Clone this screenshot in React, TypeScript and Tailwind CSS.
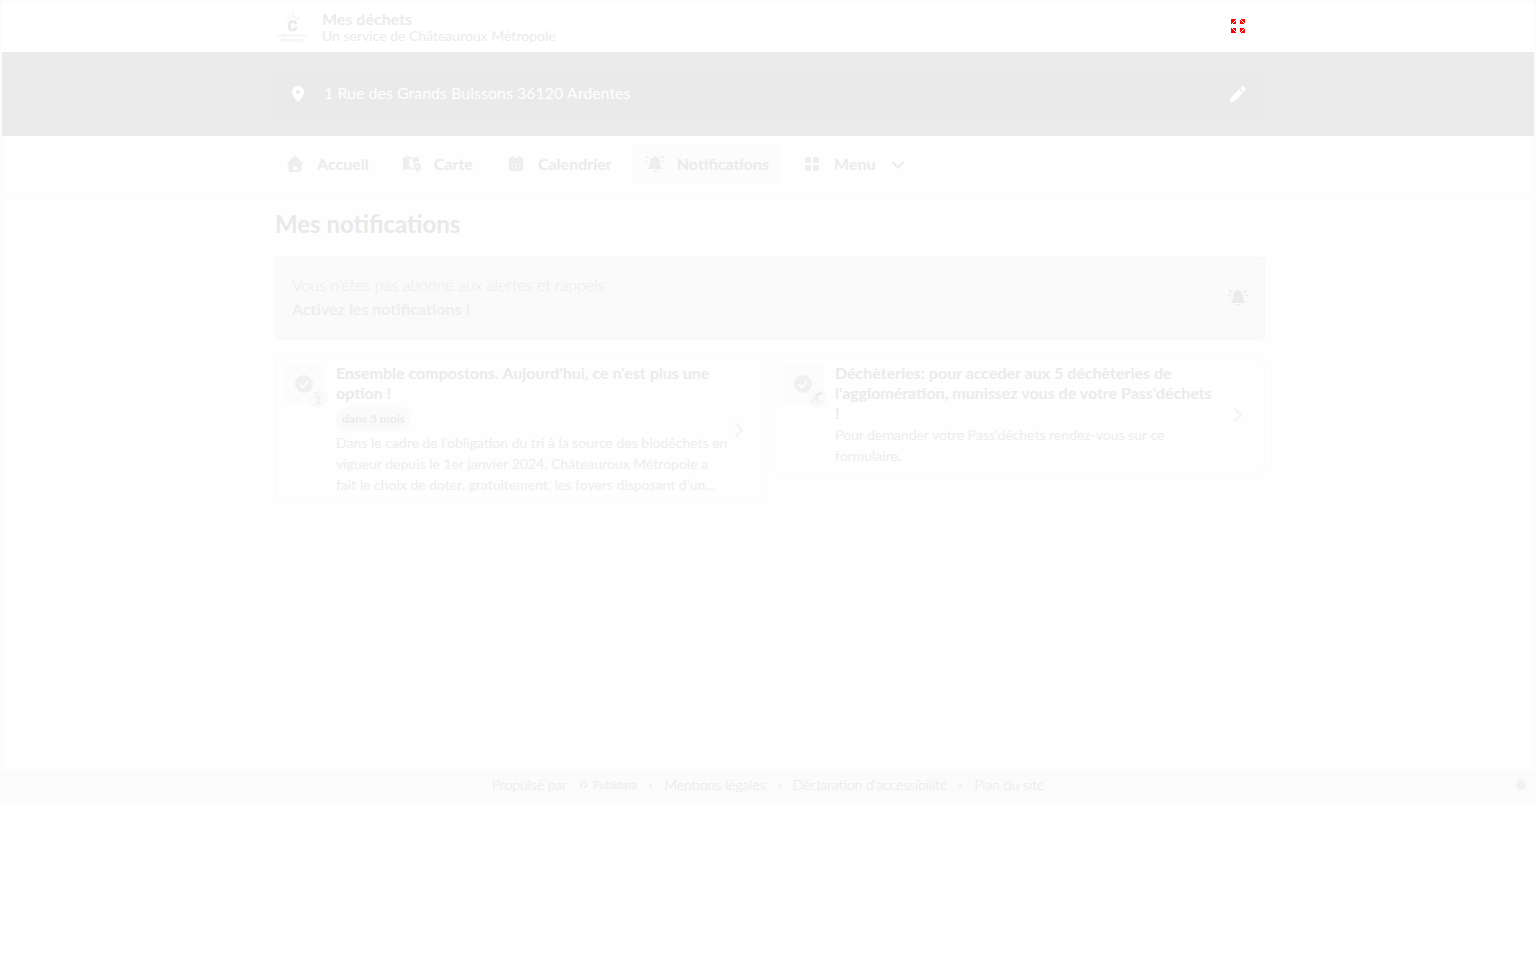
import type { ReactNode } from "react";

type NavItem = {
  label: string;
  icon: ReactNode;
  active?: boolean;
};

type Notice = {
  title: string;
  badge?: string;
  description: string;
  topic: ReactNode;
};

function TownLogo() {
  return (
    <svg viewBox="0 0 32 32" className="h-8 w-8 shrink-0" aria-label="Châteauroux Métropole" role="img">
      <path d="M17.500 1v6M13 3.500l3 3.500M22 3.500 19 7M11 7l3.500 1M24 7l-3.500 1" stroke="#efefef" fill="none" />
      <path d="M20.800 13.500v-.8c0-1.400-1.100-2.400-3-2.400-2.100 0-3.300 1.100-3.300 3v2.900c0 1.900 1.200 3 3.300 3 1.900 0 3-1 3-2.400V16" fill="none" stroke="#ebebeb" strokeWidth="2.800" />
      <text x="17" y="26" textAnchor="middle" fontSize="4" fontWeight="700" fill="#f1f1f1">CHÂTEAUROUX</text>
      <text x="17" y="31" textAnchor="middle" fontSize="4" fontWeight="700" fill="#f1f1f1">MÉTROPOLE</text>
    </svg>
  );
}

function FullscreenIcon() {
  return (
    <svg viewBox="0 0 14 14" className="h-3.5 w-3.5" fill="#ff0000" shapeRendering="crispEdges">
      <path d="M0 0h5L0 5zM5 1v4H1zM14 0H9l5 5zM9 1v4h4zM0 14h5L0 9zM5 13V9H1zM14 14H9l5-5zM9 13V9h4z" />
    </svg>
  );
}

function PinIcon() {
  return (
    <svg viewBox="0 0 20 20" className="h-5 w-5" fill="currentColor">
      <path fillRule="evenodd" d="M10 2a6 6 0 0 0-6 6c0 4.500 6 10 6 10s6-5.500 6-10a6 6 0 0 0-6-6zm0 8a2 2 0 1 1 0-4 2 2 0 0 1 0 4z" />
    </svg>
  );
}

function PencilIcon() {
  return (
    <svg viewBox="0 0 20 20" className="h-5 w-5" fill="currentColor">
      <path d="M11 5.200 14.800 9l-7.600 7.500c-1 .9-2.500 1.300-4.900 1.500-.2 0-.3-.1-.3-.3.200-2.400.6-3.900 1.500-4.900zM12 4.200l1.200-1.200a2.700 2.700 0 0 1 3.800 3.800l-1.200 1.200z" />
    </svg>
  );
}

function HomeIcon() {
  return (
    <svg viewBox="0 0 20 20" className="h-5 w-5" fill="currentColor">
      <path fillRule="evenodd" d="M9.300 2.300a1 1 0 0 1 1.400 0l7 6.700c.6.600.3 1.500-.5 1.500h-.7V16a2 2 0 0 1-2 2h-9a2 2 0 0 1-2-2v-5.500h-.7c-.8 0-1.100-.9-.5-1.500zM8 16h4v-2a2 2 0 0 0-4 0z" />
    </svg>
  );
}

function MapIcon() {
  return (
    <svg viewBox="0 0 20 20" className="h-5 w-5" fill="currentColor">
      <path fillRule="evenodd" d="M1 3.500 6.500 2l5.500 2 5-2v6a4.500 4.500 0 0 0-5.600 6.500L11 16l-4-1.500L1 17zM7 4v8.500l4 1.500V5.500z" />
      <path fillRule="evenodd" d="M15.500 9a3.500 3.500 0 0 0-3.500 3.500c0 3 3.500 6 3.500 6s3.500-3 3.500-6A3.500 3.500 0 0 0 15.500 9zm0 4.800a1.300 1.300 0 1 1 0-2.600 1.300 1.300 0 0 1 0 2.600z" />
    </svg>
  );
}

function CalendarIcon() {
  return (
    <svg viewBox="0 0 20 20" className="h-5 w-5" fill="currentColor">
      <path d="M5.500 2h2v1.500h5V2h2v1.500H15A2 2 0 0 1 17 5.500V7H3V5.500a2 2 0 0 1 2-2h.5z" />
      <path fillRule="evenodd" d="M3 7h14v8a2 2 0 0 1-2 2H5a2 2 0 0 1-2-2zm2.500 2.500v1.500H7V9.500zm3.700 0v1.500h1.600V9.500zm3.800 0v1.500h1.500V9.500zM5.500 13v1.500H7V13zm3.700 0v1.500h1.600V13zm3.800 0v1.500h1.500V13z" />
    </svg>
  );
}

function BellIcon() {
  return (
    <svg viewBox="0 0 20 20" className="h-5 w-5" fill="currentColor">
      <path d="M9 2h2v.8c2.600.5 4 2.400 4 5v3.500c0 1 2 2 2 3.200v.5H3v-.5c0-1.200 2-2.200 2-3.200V7.800c0-2.600 1.400-4.500 4-5zM8.300 16h3.400c-.2 1-.8 1.500-1.700 1.500S8.500 17 8.300 16z" />
      <path d="M1 2.500 4 4M0 7.500h3M19 2.500 16 4M20 7.500h-3" stroke="currentColor" strokeWidth="1.500" fill="none" />
    </svg>
  );
}

function GridIcon() {
  return (
    <svg viewBox="0 0 20 20" className="h-5 w-5" fill="currentColor">
      <rect x="3" y="3" width="6" height="6" rx="1.500" />
      <rect x="11" y="3" width="6" height="6" rx="1.500" />
      <rect x="3" y="11" width="6" height="6" rx="1.500" />
      <rect x="11" y="11" width="6" height="6" rx="1.500" />
    </svg>
  );
}

function ChevronIcon() {
  return (
    <svg viewBox="0 0 20 20" className="h-5 w-5" fill="none" stroke="currentColor" strokeWidth="2">
      <path d="m7 4 6 6-6 6" strokeLinecap="round" />
    </svg>
  );
}

function ChevronDownIcon() {
  return (
    <svg viewBox="0 0 20 20" className="h-5 w-5" fill="none" stroke="currentColor" strokeWidth="2.200">
      <path d="m4.500 8 5.500 5.500 5.500-5.500" />
    </svg>
  );
}

function CheckIcon() {
  return (
    <svg viewBox="0 0 20 20" className="h-5 w-5">
      <circle cx="10" cy="10" r="9" fill="#f0f0f0" />
      <path d="m6 10.500 2.800 2.800L14 7" fill="none" stroke="#fdfdfd" strokeWidth="1.800" />
    </svg>
  );
}

function InfoTopic() {
  return (
    <svg viewBox="0 0 16 16" className="h-4 w-4" fill="#f1f1f1">
      <path d="M4 2.500c2-.5 3.500 0 4.500 1.500-2 .8-3.500.3-4.500-1.500zM5.500 6h6v1.300L9.500 9v3l2 1v1h-6v-1l2-1V9l-2-1.700z" />
    </svg>
  );
}

function SitesTopic() {
  return (
    <svg viewBox="0 0 16 16" className="h-4 w-4" fill="none" stroke="#ebebeb">
      <path d="m7 5.500 6.500-3" strokeWidth="3" />
      <path d="m8 7.500-5.500 4.500M8 7.500v6.500M8 7.500l4.500 5M4 7.500l3-1.500" strokeWidth="1.100" />
    </svg>
  );
}

const navItems: NavItem[] = [
  { label: "Accueil", icon: <HomeIcon /> },
  { label: "Carte", icon: <MapIcon /> },
  { label: "Calendrier", icon: <CalendarIcon /> },
  { label: "Notifications", icon: <BellIcon />, active: true },
];

const notices: Notice[] = [
  {
    title: "Ensemble compostons. Aujourd'hui, ce n'est plus une option !",
    badge: "dans 3 mois",
    description:
      "Dans le cadre de l’obligation du tri à la source des biodéchets en vigueur depuis le 1er janvier 2024, Châteauroux Métropole a fait le choix de doter, gratuitement, les foyers disposant d’un…",
    topic: <InfoTopic />,
  },
  {
    title: "Déchèteries: pour acceder aux 5 déchèteries de l'agglomération, munissez vous de votre Pass'déchets !",
    description: "Pour demander votre Pass'déchets rendez-vous sur ce formulaire.",
    topic: <SitesTopic />,
  },
];

const footerLinks = ["Mentions légales", "Déclaration d'accessibilité", "Plan du site"];

function Container({ children, className = "" }: { children: ReactNode; className?: string }) {
  return <div className={`mx-auto w-full max-w-[990px] ${className}`}>{children}</div>;
}

function NoticeCard({ notice }: { notice: Notice }) {
  return (
    <a href="#notice" className="flex rounded-lg border border-[#fbfbfb] p-2">
      <div className="relative mr-3 flex h-10 w-10 shrink-0 items-center justify-center rounded-sm bg-[#fcfcfc]">
        <CheckIcon />
        <span className="absolute -right-1 -bottom-1 flex h-5 w-5 items-center justify-center rounded-full bg-[#fafafa]">
          {notice.topic}
        </span>
      </div>
      <div className="-mt-px min-w-0 flex-1">
        <h2 className="text-base leading-5 font-bold text-[#ebebeb]">{notice.title}</h2>
        {notice.badge && (
          <span className="mt-1 flex h-6 w-fit items-center rounded-full bg-[#fafafa] px-1.5 text-xs font-bold text-[#ebebeb]">
            {notice.badge}
          </span>
        )}
        <p className="mt-px -mr-2.5 text-sm leading-[21px] text-[#ededed]">{notice.description}</p>
      </div>
      <span className="flex w-9 shrink-0 items-center justify-center text-[#f3f3f3]">
        <ChevronIcon />
      </span>
    </a>
  );
}

export default function App() {
  return (
    <div className="min-h-screen bg-[#fefefe] font-['Lato',sans-serif] text-[#ebebeb]">
      <div className="flex min-h-[calc(100vh-158px)] flex-col">
        <div className="flex flex-1 flex-col border-x-2 border-t-2 border-[#fcfcfc]">
          <header className="flex h-[50px] items-center bg-white pl-1">
            <Container className="flex items-center">
              <TownLogo />
              <div className="ml-[15px] flex-1 pt-0.5">
                <p className="text-base leading-4 font-bold">Mes déchets</p>
                <p className="text-sm leading-[18px]">Un service de Châteauroux Métropole</p>
              </div>
              <button type="button" aria-label="Plein écran" className="mr-5 pb-0.5">
                <FullscreenIcon />
              </button>
            </Container>
          </header>

          <div className="bg-[#ebebeb] py-4 pl-1">
            <Container>
              <button
                type="button"
                className="flex h-[52px] w-full items-center rounded-sm bg-[#eaeaea] px-[13px] text-left text-white"
              >
                <PinIcon />
                <span className="ml-4 flex-1 pb-0.5">1 Rue des Grands Buissons 36120 Ardentes</span>
                <span className="mr-1">
                  <PencilIcon />
                </span>
              </button>
            </Container>
          </div>

          <nav className="border-b border-[#fbfbfb] pt-2 pb-[9px] pl-1">
            <Container>
              <div className="-ml-0.5 flex gap-[9px] font-bold">
                {navItems.map((item) => (
                  <a
                    key={item.label}
                    href="#page"
                    className={`flex h-10 items-center gap-3 rounded-sm px-3 ${item.active ? "bg-[#fcfcfc]" : ""}`}
                  >
                    <span className="text-[#eeeeee]">{item.icon}</span>
                    {item.label}
                  </a>
                ))}
                <button type="button" className="flex h-10 items-center gap-3 px-3">
                  <span className="text-[#eeeeee]">
                    <GridIcon />
                  </span>
                  Menu
                  <ChevronDownIcon />
                </button>
              </div>
            </Container>
          </nav>

          <main className="flex-1 pl-1">
            <Container>
              <h1 className="pt-[14px] pb-[17px] text-2xl leading-8 font-bold text-[#e9e9e9]">Mes notifications</h1>
              <button
                type="button"
                className="flex w-full items-center justify-between rounded border border-[#f7f7f7] bg-[#fafafa] px-4 py-[15px] text-left leading-6"
              >
                <span className="pb-0.5">
                  <span className="block font-light">Vous n’êtes pas abonné aux alertes et rappels</span>
                  <span className="block font-bold text-[#eeeeee]">Activez les notifications !</span>
                </span>
                <BellIcon />
              </button>
              <div className="mt-4 grid grid-cols-2 items-start gap-2">
                {notices.map((notice) => (
                  <NoticeCard key={notice.title} notice={notice} />
                ))}
              </div>
            </Container>
          </main>
        </div>

        <footer className="relative flex h-8 items-center justify-center bg-[#fbfbfb] pb-0.5 text-sm font-light text-[#e7e7e7]">
          <span>Propulsé par</span>
          <a href="#publidata" className="ml-3 flex items-center gap-1 font-['Inter',sans-serif] text-[10px] font-normal text-[#ebebeb]">
            <svg viewBox="0 0 10 10" className="h-2.5 w-2.5" fill="none" stroke="currentColor" strokeWidth="1.600">
              <path d="M2 9V7.800M2 6.500V4.500a2.700 2.700 0 1 1 2.800 2.700H4" />
            </svg>
            Publidata
          </a>
          {footerLinks.map((link) => (
            <span key={link} className="flex items-center">
              <span className="mx-3 h-[3px] w-[3px] rounded-full bg-[#eeeeee]" />
              <a href="#info">{link}</a>
            </span>
          ))}
          <span className="absolute right-2.5 h-2.5 w-2.5 rounded-full bg-[#f1f1f1]" />
        </footer>
      </div>
    </div>
  );
}
